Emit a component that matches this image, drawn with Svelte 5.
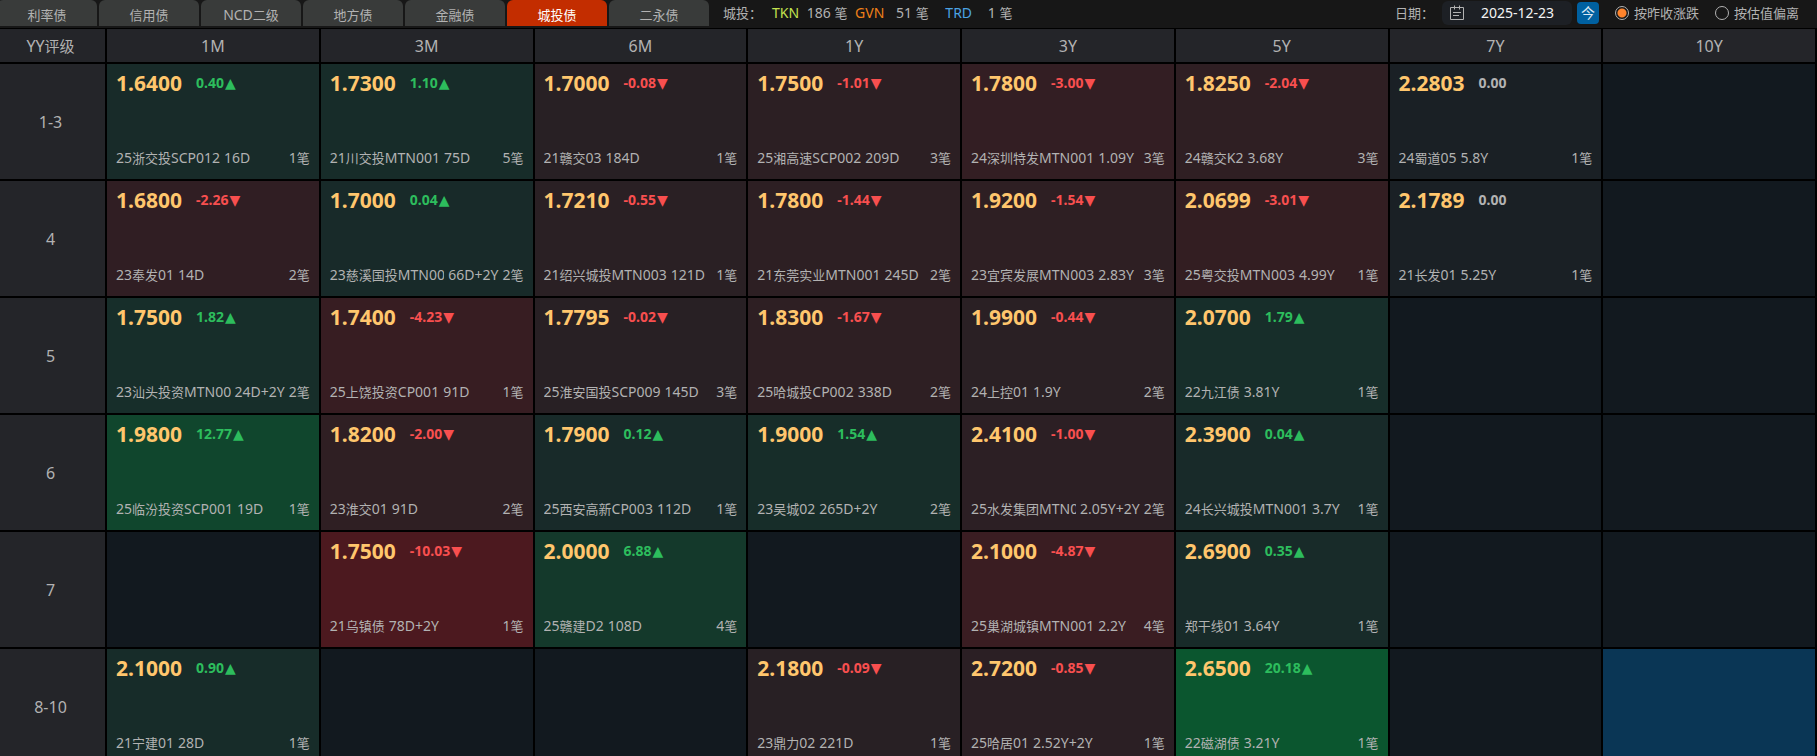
<script lang="ts">
  type Quote = {
    value: string;
    change: number;
    name: string;
    term: string;
    count: number;
  };

  type Row = {
    rating: string;
    cells: (Quote | null)[];
  };

  const tabs = ["利率债", "信用债", "NCD二级", "地方债", "金融债", "城投债", "二永债"];
  const tenors = ["1M", "3M", "6M", "1Y", "3Y", "5Y", "7Y", "10Y"];
  const stats = [
    { key: "TKN", count: 186, tone: "tkn" },
    { key: "GVN", count: 51, tone: "gvn" },
    { key: "TRD", count: 1, tone: "trd" },
  ];
  const modes = [
    { id: "close", label: "按昨收涨跌" },
    { id: "valuation", label: "按估值偏离" },
  ];

  function q(value: string, change: number, name: string, term: string, count: number): Quote {
    return { value, change, name, term, count };
  }

  const rows: Row[] = [
    {
      rating: "1-3",
      cells: [
        q("1.6400", 0.4, "25浙交投SCP012", "16D", 1),
        q("1.7300", 1.1, "21川交投MTN001", "75D", 5),
        q("1.7000", -0.08, "21赣交03", "184D", 1),
        q("1.7500", -1.01, "25湘高速SCP002", "209D", 3),
        q("1.7800", -3.0, "24深圳特发MTN001", "1.09Y", 3),
        q("1.8250", -2.04, "24赣交K2", "3.68Y", 3),
        q("2.2803", 0, "24蜀道05", "5.8Y", 1),
        null,
      ],
    },
    {
      rating: "4",
      cells: [
        q("1.6800", -2.26, "23奉发01", "14D", 2),
        q("1.7000", 0.04, "23慈溪国投MTN001", "66D+2Y", 2),
        q("1.7210", -0.55, "21绍兴城投MTN003", "121D", 1),
        q("1.7800", -1.44, "21东莞实业MTN001", "245D", 2),
        q("1.9200", -1.54, "23宜宾发展MTN003", "2.83Y", 3),
        q("2.0699", -3.01, "25粤交投MTN003", "4.99Y", 1),
        q("2.1789", 0, "21长发01", "5.25Y", 1),
        null,
      ],
    },
    {
      rating: "5",
      cells: [
        q("1.7500", 1.82, "23汕头投资MTN001", "24D+2Y", 2),
        q("1.7400", -4.23, "25上饶投资CP001", "91D", 1),
        q("1.7795", -0.02, "25淮安国投SCP009", "145D", 3),
        q("1.8300", -1.67, "25哈城投CP002", "338D", 2),
        q("1.9900", -0.44, "24上控01", "1.9Y", 2),
        q("2.0700", 1.79, "22九江债", "3.81Y", 1),
        null,
        null,
      ],
    },
    {
      rating: "6",
      cells: [
        q("1.9800", 12.77, "25临汾投资SCP001", "19D", 1),
        q("1.8200", -2.0, "23淮交01", "91D", 2),
        q("1.7900", 0.12, "25西安高新CP003", "112D", 1),
        q("1.9000", 1.54, "23吴城02", "265D+2Y", 2),
        q("2.4100", -1.0, "25水发集团MTN001", "2.05Y+2Y", 2),
        q("2.3900", 0.04, "24长兴城投MTN001", "3.7Y", 1),
        null,
        null,
      ],
    },
    {
      rating: "7",
      cells: [
        null,
        q("1.7500", -10.03, "21乌镇债", "78D+2Y", 1),
        q("2.0000", 6.88, "25赣建D2", "108D", 4),
        null,
        q("2.1000", -4.87, "25巢湖城镇MTN001", "2.2Y", 4),
        q("2.6900", 0.35, "郑干线01", "3.64Y", 1),
        null,
        null,
      ],
    },
    {
      rating: "8-10",
      cells: [
        q("2.1000", 0.9, "21宁建01", "28D", 1),
        null,
        null,
        q("2.1800", -0.09, "23鼎力02", "221D", 1),
        q("2.7200", -0.85, "25哈居01", "2.52Y+2Y", 1),
        q("2.6500", 20.18, "22磁湖债", "3.21Y", 1),
        null,
        null,
      ],
    },
  ];

  let activeTab = $state("城投债");
  let mode = $state("close");
  let date = $state("2025-12-23");
  let selected = $state("8-10/10Y");

  function mix(from: number[], to: number[], ratio: number): string {
    const t = Math.min(1, ratio);
    return `rgb(${from.map((c, i) => Math.round(c + (to[i] - c) * t)).join(", ")})`;
  }

  // The further a quote has moved, the more saturated its cell.
  function heat(change: number): string {
    if (change > 0) return mix([24, 42, 41], [11, 86, 47], change / 20);
    if (change < 0) return mix([40, 32, 36], [76, 25, 31], -change / 10);
    return "rgb(26, 32, 37)";
  }

  // Han runs are set one step smaller than the Latin around them.
  function runs(text: string): { text: string; han: boolean }[] {
    return text
      .split(/([\u3000-\u9fff\uff00-\uffef]+)/)
      .filter(Boolean)
      .map((part) => ({ text: part, han: /[\u3000-\uffef]/.test(part) }));
  }
</script>

{#snippet mixed(text: string)}{#each runs(text) as run}{#if run.han}<span class="han">{run.text}</span>{:else}{run.text}{/if}{/each}{/snippet}

<div class="board">
  <header class="topbar">
    <nav class="tabs" aria-label="债券类型">
      {#each tabs as tab}
        <button type="button" class="tab" class:active={tab === activeTab} onclick={() => (activeTab = tab)}>
          <span>{@render mixed(tab)}</span>
        </button>
      {/each}
    </nav>

    <div class="stats">
      <span class="stats-title">{@render mixed("城投：")}</span>
      {#each stats as stat}
        <span class={stat.tone}>{stat.key}</span>
        <span class="stat-count">{@render mixed(`${stat.count} 笔`)}</span>
      {/each}
    </div>

    <div class="tools">
      <label class="date-label" for="trade-date">{@render mixed("日期：")}</label>
      <div class="date-box">
        <svg viewBox="0 0 16 16" width="16" height="16" aria-hidden="true">
          <path
            d="M1.5 2.500h13v12h-13zM5.500 .5v4M10.500 .5v4M4 7.500h8M4 10.500h6"
            fill="none"
            stroke="currentColor"
          />
        </svg>
        <input id="trade-date" type="text" bind:value={date} />
      </div>
      <button type="button" class="today" onclick={() => (date = "2025-12-23")}>今</button>
      {#each modes as item}
        <label class="mode">
          <input type="radio" name="mode" value={item.id} bind:group={mode} />
          <span class="han">{item.label}</span>
        </label>
      {/each}
    </div>
  </header>

  <table class="matrix">
    <thead>
      <tr>
        <th class="rating-col" scope="col">{@render mixed("YY评级")}</th>
        {#each tenors as tenor}
          <th scope="col">{tenor}</th>
        {/each}
      </tr>
    </thead>
    <tbody>
      {#each rows as row}
        <tr>
          <th class="rating" scope="row">{row.rating}</th>
          {#each row.cells as cell, i}
            <td
              class:selected={selected === `${row.rating}/${tenors[i]}`}
              style:background={cell ? heat(cell.change) : undefined}
              onclick={() => (selected = `${row.rating}/${tenors[i]}`)}
            >
              <div class="cell">
                {#if cell}
                  <div class="quote">
                    <span class="value">{cell.value}</span>
                    <span class="change" class:up={cell.change > 0} class:down={cell.change < 0}>
                      <span>{cell.change.toFixed(2)}</span>
                      {#if cell.change !== 0}
                        <span class="arrow">{cell.change > 0 ? "▲" : "▼"}</span>
                      {/if}
                    </span>
                  </div>
                  <div class="bond">
                    <span class="name">{@render mixed(cell.name)}</span>
                    <span class="term">{cell.term}</span>
                    <span class="count">{@render mixed(`${cell.count}笔`)}</span>
                  </div>
                {/if}
              </div>
            </td>
          {/each}
        </tr>
      {/each}
    </tbody>
  </table>
</div>

<style>
  :global(body) {
    background: #000;
  }

  .board {
    height: 100vh;
    overflow: hidden;
    background: #000;
    color: #b2b2b2;
    font-family: "Noto Sans", "Noto Sans CJK SC", sans-serif;
    font-size: 14px;
    line-height: 20px;
  }

  button,
  input {
    margin: 0;
    border: 0;
    padding: 0;
    color: inherit;
    font: inherit;
  }

  button {
    cursor: pointer;
  }

  .han {
    font-size: 13px;
  }

  .topbar {
    display: flex;
    height: 28px;
    border-bottom: 1px solid #000;
    background: #171717;
    white-space: nowrap;
  }

  .tabs {
    display: flex;
    gap: 2px;
    height: 26px;
    margin-left: -3px;
  }

  .tab {
    width: 100px;
    padding-top: 4px;
    border-radius: 6px 6px 0 0;
    background: #393b3a;
  }

  .tab.active {
    background: #c32d00;
    color: #fff;
  }

  .stats {
    display: flex;
    align-items: center;
    height: 26px;
    margin-left: 14px;
  }

  .stats-title {
    margin-right: 10px;
  }

  .stat-count {
    width: 56px;
    text-align: center;
  }

  .tkn {
    color: #c3e34f;
  }

  .gvn {
    color: #f08019;
  }

  .trd {
    margin-left: 5px;
    color: #4ba3e3;
  }

  .tools {
    display: flex;
    align-items: center;
    height: 26px;
    margin-left: auto;
    padding-right: 18px;
  }

  .date-label {
    margin-right: 8px;
  }

  .date-box {
    display: flex;
    align-items: center;
    gap: 16px;
    width: 130px;
    height: 24px;
    margin-right: 5px;
    padding-left: 7px;
    border-radius: 6px;
    background: #1d2025;
    box-sizing: border-box;
  }

  .date-box svg {
    flex: none;
  }

  .date-box input {
    width: 84px;
    background: transparent;
    color: #f4f4f4;
    outline: 0;
  }

  .today {
    width: 22px;
    height: 22px;
    border-radius: 4px;
    background: #0060a0;
    color: #dce9f4;
    line-height: 20px;
  }

  .mode {
    display: flex;
    align-items: center;
    gap: 5px;
    margin-left: 16px;
  }

  .mode input {
    width: 14px;
    height: 14px;
    border: 1px solid #b2b2b2;
    border-radius: 50%;
    appearance: none;
  }

  .mode input:checked {
    background: radial-gradient(circle, #ff842c 0 4px, transparent 5px);
  }

  .matrix {
    width: 100%;
    border-spacing: 0;
    table-layout: fixed;
  }

  th,
  td {
    padding: 0;
    border-right: 2px solid #000;
    border-bottom: 2px solid #000;
  }

  th {
    padding-top: 2px;
    background: #242529;
    font-size: 16px;
    font-weight: 400;
    line-height: 31px;
  }

  th .han {
    font-size: 15px;
  }

  .rating-col {
    width: 101px;
  }

  .rating-col,
  .rating {
    padding-right: 4px;
  }

  td {
    background: #12191f;
  }

  td.selected {
    background: #0a3655;
  }

  .cell {
    display: flex;
    flex-direction: column;
    justify-content: space-between;
    height: 115px;
    padding: 5px 9px 11px;
    box-sizing: border-box;
    white-space: nowrap;
  }

  .quote {
    display: flex;
    align-items: center;
    gap: 14px;
    height: 28px;
  }

  .value {
    color: #ffc66d;
    font-size: 21px;
    font-weight: 700;
    line-height: 28px;
  }

  .change {
    display: flex;
    align-items: center;
    gap: 1px;
    font-weight: 700;
  }

  .up {
    color: #2dbd5d;
  }

  .down {
    color: #f84f4f;
  }

  .arrow {
    font-family: "DejaVu Sans", sans-serif;
    font-size: 14px;
    font-weight: 400;
  }

  .bond {
    display: flex;
    align-items: center;
    gap: 4px;
    height: 20px;
  }

  .name {
    min-width: 0;
    overflow: hidden;
  }

  .count {
    margin-left: auto;
  }
</style>
